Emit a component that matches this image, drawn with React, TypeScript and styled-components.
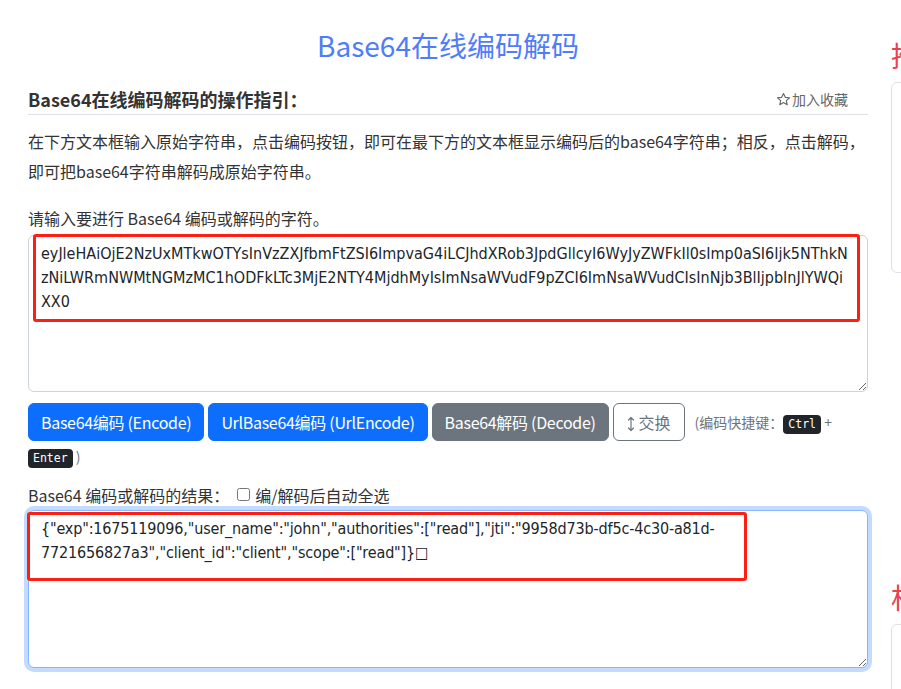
import React from "react";
import styled, { createGlobalStyle, css } from "styled-components";

const GlobalStyle = createGlobalStyle`
  html, body { margin: 0; padding: 0; background: #fff; }
  body {
    font-family: "Noto Sans CJK SC", "Noto Sans", sans-serif;
    color: #212529;
    overflow: hidden;
  }
`;

const Page = styled.div`
  display: flex;
  align-items: flex-start;
  gap: 23px;
  padding-left: 28px;
  width: 100%;
  box-sizing: border-box;
  overflow: hidden;
`;

const Main = styled.main`
  flex: 0 0 840px;
  width: 840px;
  padding-top: 28px;
`;

const Title = styled.h1`
  margin: 0;
  text-align: center;
  font-size: 28px;
  font-weight: 400;
  line-height: 34px;
  color: #4f7df9;
`;

const HeaderRow = styled.div`
  display: flex;
  justify-content: space-between;
  align-items: center;
  margin-top: 23px;
  padding-bottom: 1px;
  border-bottom: 1px solid #dee2e6;
`;

const Heading = styled.h2`
  margin: 0;
  font-size: 18px;
  font-weight: 700;
  line-height: 28px;
  color: #333;
`;

const FavLink = styled.a`
  display: flex;
  align-items: center;
  gap: 1px;
  margin-right: 20px;
  font-size: 14px;
  color: #666;
  text-decoration: none;
`;

const Intro = styled.p`
  margin: 11px 0 0;
  font-size: 16px;
  line-height: 30px;
  color: #333;
`;

const FieldLabel = styled.div`
  margin-top: 20px;
  font-size: 16px;
  line-height: 24px;
  color: #333;
`;

const FieldWrap = styled.div<{ $mt: number }>`
  position: relative;
  margin-top: ${(p) => p.$mt}px;
`;

const TextArea = styled.textarea<{ $h: number; $tracking: number; $focused?: boolean }>`
  display: block;
  width: 100%;
  height: ${(p) => p.$h}px;
  box-sizing: border-box;
  padding: 6px 17px 6px 12px;
  font-family: "DejaVu Sans Condensed", "Noto Sans CJK SC", sans-serif;
  font-size: 16px;
  letter-spacing: ${(p) => p.$tracking}px;
  line-height: 24px;
  color: #212529;
  background: #fff;
  border: 1px solid #ced4da;
  border-radius: 6px;
  resize: vertical;
  outline: none;
  ${(p) =>
    p.$focused &&
    css`
      border-color: #86b7fe;
      box-shadow: 0 0 0 4px rgba(13, 110, 253, 0.25);
    `}
`;

const Annotation = styled.div<{ $l: number; $t: number; $w: number; $h: number }>`
  position: absolute;
  left: ${(p) => p.$l}px;
  top: ${(p) => p.$t}px;
  width: ${(p) => p.$w}px;
  height: ${(p) => p.$h}px;
  box-sizing: border-box;
  border: 3px solid #ff1f12;
  border-radius: 3px;
  pointer-events: none;
`;

const Actions = styled.div`
  margin-top: 11px;
  line-height: 24px;
`;

const Button = styled.button<{ $variant: "primary" | "secondary" | "outline" }>`
  display: inline-block;
  vertical-align: middle;
  margin: 0 4px 0 0;
  padding: 6px 12px;
  font-family: "Noto Sans CJK SC", "Noto Sans", sans-serif;
  font-size: 16px;
  letter-spacing: -0.3px;
  line-height: 24px;
  border-radius: 6px;
  border: 1px solid;
  cursor: pointer;
  ${(p) =>
    p.$variant === "primary"
      ? css`
          background: #0d6efd;
          border-color: #0d6efd;
          color: #fff;
        `
      : p.$variant === "secondary"
      ? css`
          background: #6c757d;
          border-color: #6c757d;
          color: #fff;
        `
      : css`
          background: #fff;
          border-color: #6c757d;
          color: #6c757d;
          letter-spacing: 0;
          padding: 6px 13px;
        `}
`;

const SwapIcon = styled.svg`
  width: 8px;
  height: 16px;
  margin-right: 4px;
  vertical-align: -3px;
`;

const Hint = styled.span`
  margin-left: 6px;
  font-size: 14px;
  color: #6c757d;
  vertical-align: middle;
`;

const Kbd = styled.kbd`
  display: inline-block;
  padding: 1px 5px;
  font-family: "DejaVu Sans Mono", "Liberation Mono", monospace;
  font-size: 11.5px;
  line-height: 17px;
  color: #fff;
  background: #212529;
  border-radius: 4px;
  white-space: nowrap;
`;

const ResultRow = styled.div`
  display: flex;
  align-items: center;
  margin-top: 15px;
  font-size: 16px;
  line-height: 24px;
  color: #333;
`;

const CheckLabel = styled.label`
  display: flex;
  align-items: center;
  margin-left: 8px;
`;

const Check = styled.input`
  width: 13px;
  height: 13px;
  margin: 0 5px 0 0;
`;

const Side = styled.aside`
  flex: 0 0 260px;
  padding-top: 38px;
`;

const SideTitle = styled.h3<{ $mt: number }>`
  margin: ${(p) => p.$mt}px 0 0;
  font-size: 28px;
  font-weight: 400;
  line-height: 34px;
  color: #e8414f;
`;

const SideCard = styled.div<{ $h: number }>`
  margin-top: 10px;
  height: ${(p) => p.$h}px;
  border: 1px solid #dee2e6;
  border-radius: 6px;
`;

const INPUT =
  "eyJleHAiOjE2NzUxMTkwOTYsInVzZXJfbmFtZSI6ImpvaG4iLCJhdXRob3JpdGllcyI6WyJyZWFkIl0sImp0aSI6Ijk5NThkNzNiLWRmNWMtNGMzMC1hODFkLTc3MjE2NTY4MjdhMyIsImNsaWVudF9pZCI6ImNsaWVudCIsInNjb3BlIjpbInJlYWQiXX0";
const OUTPUT =
  '{"exp":1675119096,"user_name":"john","authorities":["read"],"jti":"9958d73b-df5c-4c30-a81d-7721656827a3","client_id":"client","scope":["read"]}\u25A1';

const StarIcon = () => (
  <svg width="15" height="15" viewBox="0 0 16 16" fill="none" stroke="#666" strokeWidth="1.2" strokeLinejoin="round">
    <path d="M8 1.6l1.9 4.1 4.5.5-3.4 3 1 4.4L8 11.3l-4 2.3 1-4.4-3.4-3 4.5-.5z" />
  </svg>
);

export default function App() {
  return (
    <>
      <GlobalStyle />
      <Page>
        <Main>
          <Title>Base64在线编码解码</Title>
          <HeaderRow>
            <Heading>Base64在线编码解码的操作指引：</Heading>
            <FavLink href="#">
              <StarIcon />
              加入收藏
            </FavLink>
          </HeaderRow>
          <Intro>
            在下方文本框输入原始字符串，点击编码按钮，即可在最下方的文本框显示编码后的base64字符串；相反，点击解码，即可把base64字符串解码成原始字符串。
          </Intro>
          <FieldLabel>请输入要进行 Base64 编码或解码的字符。</FieldLabel>
          <FieldWrap $mt={5}>
            <TextArea $h={157} $tracking={0} defaultValue={INPUT} spellCheck={false} />
            <Annotation $l={5} $t={-1} $w={827} $h={88} />
          </FieldWrap>
          <Actions>
            <Button $variant="primary">Base64编码 (Encode)</Button>
            <Button $variant="primary">UrlBase64编码 (UrlEncode)</Button>
            <Button $variant="secondary">Base64解码 (Decode)</Button>
            <Button $variant="outline">
              <SwapIcon viewBox="0 0 8 16" fill="none" stroke="#6c757d" strokeWidth="1.2" strokeLinecap="round" strokeLinejoin="round">
                <path d="M4 1.5v13M1.5 4L4 1.5 6.5 4M1.5 12L4 14.5 6.5 12" />
              </SwapIcon>
              交换
            </Button>
            <Hint>
              (编码快捷键：<Kbd>Ctrl</Kbd> + <Kbd>Enter</Kbd> )
            </Hint>
          </Actions>
          <ResultRow>
            Base64 编码或解码的结果：
            <CheckLabel>
              <Check type="checkbox" />
              编/解码后自动全选
            </CheckLabel>
          </ResultRow>
          <FieldWrap $mt={3}>
            <TextArea $h={158} $tracking={-0.16} $focused defaultValue={OUTPUT} spellCheck={false} />
            <Annotation $l={-1} $t={2} $w={720} $h={69} />
          </FieldWrap>
        </Main>
        <Side>
          <SideTitle $mt={0}>推荐工具</SideTitle>
          <SideCard $h={189} />
          <SideTitle $mt={307}>相关工具</SideTitle>
          <SideCard $h={200} />
        </Side>
      </Page>
    </>
  );
}
